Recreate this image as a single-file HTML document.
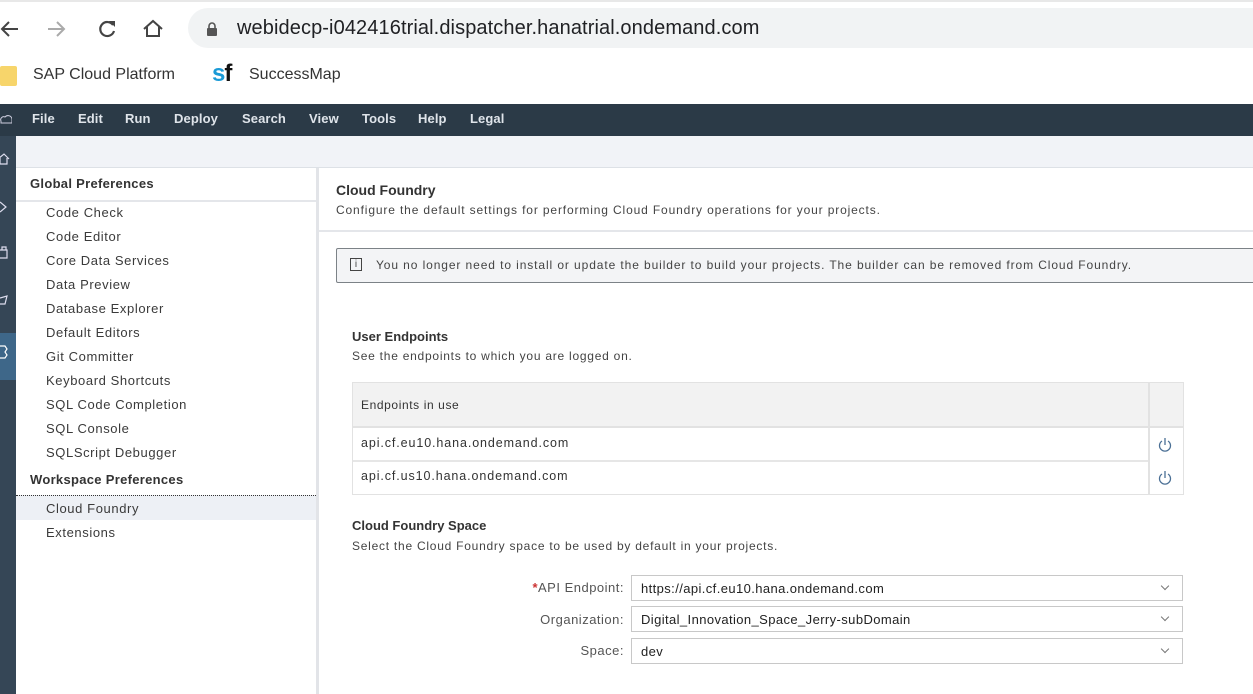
<!DOCTYPE html>
<html><head><meta charset="utf-8"><style>
*{margin:0;padding:0;box-sizing:border-box}
body{width:1253px;height:694px;overflow:hidden;background:#fff;font-family:"Liberation Sans",sans-serif;position:relative;color:#333}
.a{position:absolute;white-space:nowrap}
.m{color:#dfe4ea;font-size:13px;top:111px;font-weight:bold;letter-spacing:0.1px}
.li{left:46px;font-size:13px;letter-spacing:0.6px;color:#3a3a3a}
.lbl{font-size:13px;letter-spacing:0.5px;color:#555;text-align:right;right:629px}
.sel{left:631px;width:552px;height:26px;border:1px solid #c8c8c8;background:#fff;font-size:13px;letter-spacing:0.4px;color:#222;padding:5px 9px}
.sel:after{content:"";position:absolute;right:14px;top:7px;width:5px;height:5px;border-right:1px solid #777;border-bottom:1px solid #777;transform:rotate(45deg)}
</style></head><body>
<div class="a" style="left:0;top:0;width:1253px;height:2px;background:#e8e8e8"></div>
<svg class="a" style="left:0;top:16px" width="170" height="26" viewBox="0 0 170 26">
<path d="M18 13H2M9 6L2 13l7 7" stroke="#444" stroke-width="2" fill="none"/>
<path d="M48 13h16M57 6l7 7-7 7" stroke="#aaa" stroke-width="2" fill="none"/>
<path d="M113 9a7 7 0 1 0 1 6" stroke="#444" stroke-width="2.2" fill="none"/><path d="M109 5h6v6z" fill="#444"/>
<path d="M144 13l9-8 9 8M147 11v9h12v-9" stroke="#444" stroke-width="2" fill="none"/>
</svg>
<div class="a" style="left:188px;top:8px;width:1100px;height:40px;border-radius:20px;background:#f1f3f4"></div>
<svg class="a" style="left:206px;top:21px" width="12" height="15"><path d="M3 7V5a3 3 0 0 1 6 0v2" stroke="#555" stroke-width="1.6" fill="none"/><rect x="1" y="7" width="10" height="8" rx="1" fill="#555"/></svg>
<div class="a" style="left:237px;top:17px;font-size:20px;color:#202124;letter-spacing:0.1px">webidecp-i042416trial.dispatcher.hanatrial.ondemand.com</div>
<div class="a" style="left:0;top:66px;width:17px;height:20px;background:#f7d56b;border-radius:2px"></div>
<div class="a" style="left:33px;top:66px;font-size:16px;color:#333">SAP Cloud Platform</div>
<div class="a" style="left:212px;top:60px;font-size:24px;font-weight:bold;letter-spacing:-1px"><span style="color:#1a9ad6">s</span><span style="color:#111">f</span></div>
<div class="a" style="left:249px;top:66px;font-size:16px;color:#333">SuccessMap</div>
<div class="a" style="left:0;top:104px;width:1253px;height:32px;background:#2b3a47"></div>
<svg class="a" style="left:0;top:112px" width="12" height="14"><path d="M1 9a3 3 0 0 1 4-4a4 4 0 0 1 7 2v4H1z" stroke="#ccd" stroke-width="1" fill="none"/></svg>
<div class="a m" style="left:32px">File</div><div class="a m" style="left:78px">Edit</div><div class="a m" style="left:125px">Run</div><div class="a m" style="left:174px">Deploy</div><div class="a m" style="left:242px">Search</div><div class="a m" style="left:309px">View</div><div class="a m" style="left:362px">Tools</div><div class="a m" style="left:418px">Help</div><div class="a m" style="left:470px">Legal</div>
<div class="a" style="left:0;top:136px;width:16px;height:558px;background:#354656"></div>
<div class="a" style="left:0;top:333px;width:16px;height:47px;background:#3e6789"></div>
<svg class="a" style="left:0;top:150px" width="16" height="240">
<path d="M-2 9l6-5 5 5M0 8v6h7V8" stroke="#dde" stroke-width="1.2" fill="none"/>
<path d="M0 52l6 5-6 5" stroke="#dde" stroke-width="1.2" fill="none"/>
<path d="M0 100h7v8H0M2 100v-3h4v3" stroke="#dde" stroke-width="1.2" fill="none"/>
<path d="M0 148l7-2-2 8H0" stroke="#dde" stroke-width="1.2" fill="none"/>
<path d="M0 196h5l2 3-2 3 2 3-2 3H0" stroke="#fff" stroke-width="1.2" fill="none"/>
</svg>
<div class="a" style="left:16px;top:136px;width:1237px;height:32px;background:#f1f3f7;border-bottom:1px solid #dde1e6"></div>
<div class="a" style="left:316px;top:168px;width:3px;height:526px;background:#e2e4e8"></div>
<div class="a" style="left:16px;top:200px;width:300px;height:2px;background:#e4e6ea"></div>
<div class="a" style="left:30px;top:176px;font-size:13px;font-weight:bold;color:#333;letter-spacing:0.3px">Global Preferences</div>
<div class="a li" style="top:205px">Code Check</div>
<div class="a li" style="top:229px">Code Editor</div>
<div class="a li" style="top:253px">Core Data Services</div>
<div class="a li" style="top:277px">Data Preview</div>
<div class="a li" style="top:301px">Database Explorer</div>
<div class="a li" style="top:325px">Default Editors</div>
<div class="a li" style="top:349px">Git Committer</div>
<div class="a li" style="top:373px">Keyboard Shortcuts</div>
<div class="a li" style="top:397px">SQL Code Completion</div>
<div class="a li" style="top:421px">SQL Console</div>
<div class="a li" style="top:445px">SQLScript Debugger</div>
<div class="a" style="left:30px;top:472px;font-size:13px;font-weight:bold;color:#333;letter-spacing:0.3px">Workspace Preferences</div>
<div class="a" style="left:16px;top:495px;width:300px;height:25px;background:#edf0f5;border-top:1px dotted #333"></div>
<div class="a li" style="top:501px">Cloud Foundry</div>
<div class="a li" style="top:525px">Extensions</div>
<div class="a" style="left:336px;top:182px;font-size:14px;font-weight:bold;color:#333">Cloud Foundry</div>
<div class="a" style="left:336px;top:203px;font-size:12px;letter-spacing:0.86px;color:#444">Configure the default settings for performing Cloud Foundry operations for your projects.</div>
<div class="a" style="left:319px;top:230px;width:934px;height:2px;background:#e4e6ea"></div>
<div class="a" style="left:336px;top:248px;width:930px;height:35px;border:1px solid #7c8287;border-radius:2px;background:#f3f4f6"></div>
<div class="a" style="left:350px;top:258px;width:12px;height:13px;border:1px solid #444;font-size:10px;line-height:11px;text-align:center;color:#444">i</div>
<div class="a" style="left:376px;top:258px;font-size:12px;letter-spacing:0.9px;color:#444">You no longer need to install or update the builder to build your projects. The builder can be removed from Cloud Foundry.</div>
<div class="a" style="left:352px;top:329px;font-size:13px;font-weight:bold;color:#333">User Endpoints</div>
<div class="a" style="left:352px;top:349px;font-size:12px;letter-spacing:0.75px;color:#444">See the endpoints to which you are logged on.</div>
<div class="a" style="left:352px;top:382px;width:832px;height:113px;border:1px solid #e2e2e2"></div>
<div class="a" style="left:353px;top:383px;width:830px;height:45px;background:#f2f2f2;border-bottom:2px solid #e2e2e2"></div>
<div class="a" style="left:353px;top:460px;width:796px;height:2px;background:#e6e6e6"></div>
<div class="a" style="left:1148px;top:383px;width:2px;height:111px;background:#e2e2e2"></div>
<div class="a" style="left:361px;top:398px;font-size:12px;letter-spacing:0.6px;color:#333">Endpoints in use</div>
<div class="a" style="left:361px;top:436px;font-size:12.5px;letter-spacing:0.9px;color:#333">api.cf.eu10.hana.ondemand.com</div>
<div class="a" style="left:361px;top:469px;font-size:12.5px;letter-spacing:0.9px;color:#333">api.cf.us10.hana.ondemand.com</div>
<svg class="a" style="left:1158px;top:436px" width="14" height="16"><path d="M4 5a5.5 5.5 0 1 0 6 0M7 2v7" stroke="#4a6f95" stroke-width="1.3" fill="none"/></svg>
<svg class="a" style="left:1158px;top:469px" width="14" height="16"><path d="M4 5a5.5 5.5 0 1 0 6 0M7 2v7" stroke="#4a6f95" stroke-width="1.3" fill="none"/></svg>
<div class="a" style="left:352px;top:518px;font-size:13px;font-weight:bold;color:#333">Cloud Foundry Space</div>
<div class="a" style="left:352px;top:539px;font-size:12px;letter-spacing:0.75px;color:#444">Select the Cloud Foundry space to be used by default in your projects.</div>
<div class="a lbl" style="top:580px"><span style="color:#c33;font-weight:bold">*</span>API Endpoint:</div>
<div class="a lbl" style="top:612px">Organization:</div>
<div class="a lbl" style="top:643px">Space:</div>
<div class="a sel" style="top:575px">https://api.cf.eu10.hana.ondemand.com</div>
<div class="a sel" style="top:606px">Digital_Innovation_Space_Jerry-subDomain</div>
<div class="a sel" style="top:638px">dev</div>
</body></html>
